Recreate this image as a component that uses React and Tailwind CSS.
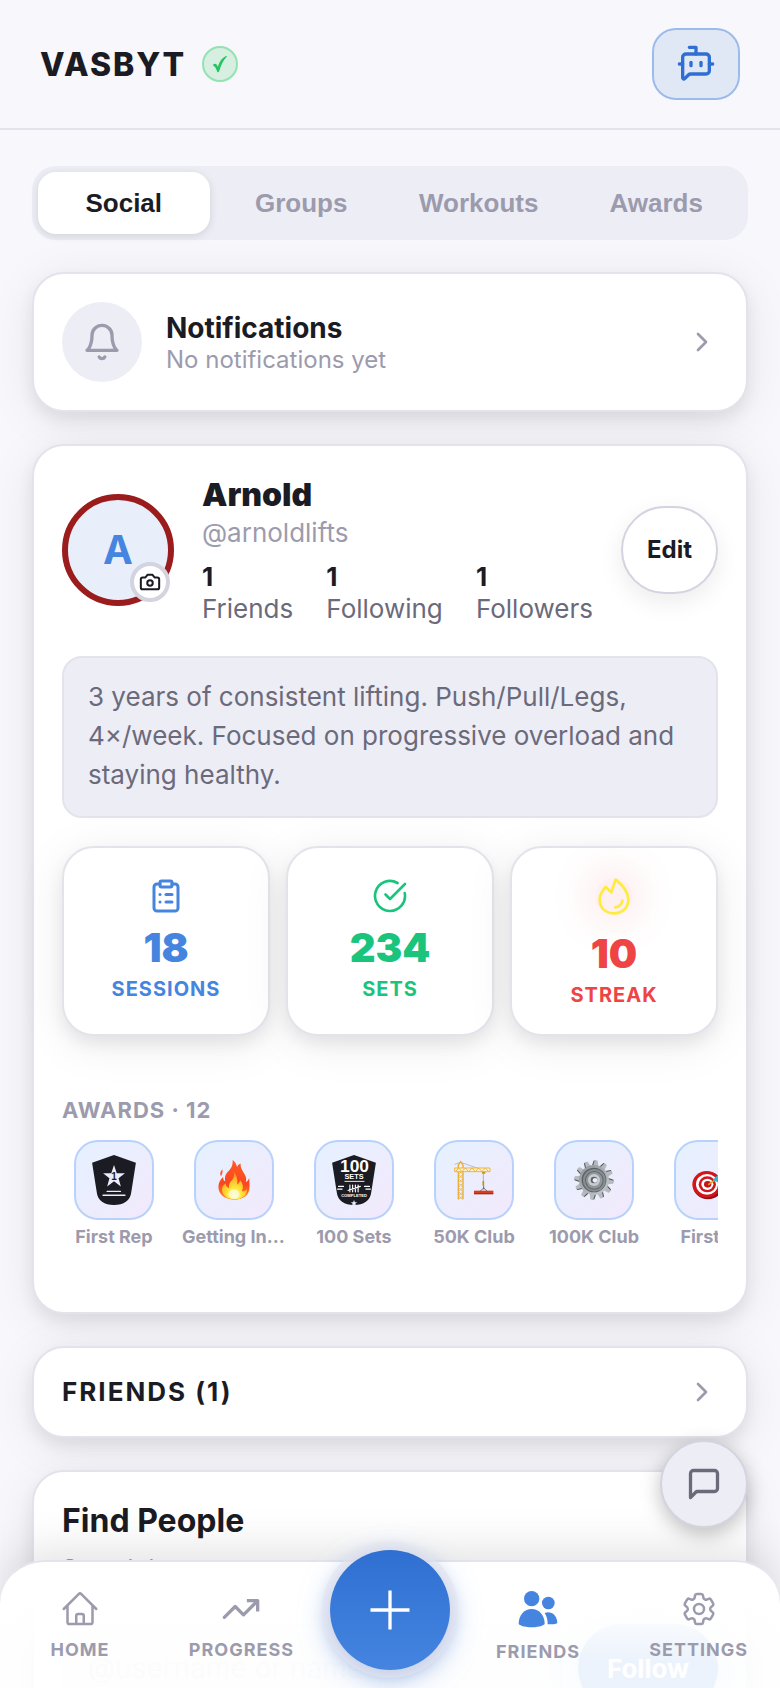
import React from "react";
import { BotMessageSquare, ChevronRight, CircleCheckBig, ClipboardList } from "lucide-react";
import { HiOutlineHome, HiOutlineCog6Tooth } from "react-icons/hi2";

const cardClass =
  "rounded-[32px] border-2 border-[#e4e3ec] bg-white shadow-[0_8px_16px_rgba(0,0,0,0.07),0_8px_48px_rgba(0,0,0,0.08)]";

function VerifiedTick() {
  return (
    <svg viewBox="0 0 36 36" className="size-9 shrink-0" aria-hidden="true">
      <path
        d="M11.200 18.500c1.800-1.400 3.500-.9 4.700 2.400C17.600 15.500 20 11.800 24.300 10.100c.7-.2.800.2.400.7-3.600 3.700-5.700 8.200-7.600 14.800-.8 1-1.500 1-1.900-.2-1.200-3.200-2-4.700-4-6-.3-.2-.3-.6 0-.9Z"
        fill="#22c55e"
      />
    </svg>
  );
}

function BellIcon() {
  return (
    <svg viewBox="0 0 24 24" className="size-10" fill="none" stroke="currentColor" strokeWidth="2" strokeLinecap="round" strokeLinejoin="round" aria-hidden="true">
      <path d="M6 8a6 6 0 0 1 12 0c0 7 3 9 3 9H3s3-2 3-9" />
      <path d="M10.300 21a1.940 1.940 0 0 0 3.400 0" />
    </svg>
  );
}

function CameraIcon() {
  return (
    <svg viewBox="0 0 24 24" className="size-[22px]" fill="none" stroke="currentColor" strokeWidth="2.200" strokeLinecap="round" strokeLinejoin="round" aria-hidden="true">
      <path d="M14.500 4h-5L7 7H4a2 2 0 0 0-2 2v9a2 2 0 0 0 2 2h16a2 2 0 0 0 2-2V9a2 2 0 0 0-2-2h-3l-2.500-3z" />
      <circle cx="12" cy="13" r="3" />
    </svg>
  );
}

function FlameIcon() {
  return (
    <svg viewBox="0 2 108 108" className="size-9 overflow-visible" fill="none" stroke="#ffeb3b" strokeWidth="8" strokeLinecap="round" strokeLinejoin="round" aria-hidden="true">
      <path d="M59 7c18 14 38 36 38 60 0 24-18 41-43 41S11 92 11 67c0-14 8-27 18-38l17 16Z" />
      <path d="M79 70c-2 12-9 18-21 20" />
    </svg>
  );
}

function ChatIcon() {
  return (
    <svg viewBox="0 0 24 24" className="size-9" fill="none" stroke="currentColor" strokeWidth="2.200" strokeLinecap="round" strokeLinejoin="round" aria-hidden="true">
      <path d="M21 15a2 2 0 0 1-2 2H7l-4 4V5a2 2 0 0 1 2-2h14a2 2 0 0 1 2 2z" />
    </svg>
  );
}

function TrendIcon() {
  return (
    <svg viewBox="0 0 24 24" className="size-10" fill="none" stroke="currentColor" strokeWidth="2" strokeLinejoin="round" aria-hidden="true">
      <path d="M21.500 7.500 13.500 15.500l-5-5L2 17" strokeLinecap="round" />
      <path d="M15.500 7H22v6.500" />
    </svg>
  );
}

function PeopleIcon() {
  return (
    <svg viewBox="0 0 120 120" className="size-10" fill="#4585e0" aria-hidden="true">
      <circle cx="41" cy="29" r="23" />
      <circle cx="91" cy="42" r="19" />
      <path d="M2 104C2 78 20 60 41 60s39 18 39 44c0 3-14 10.500-39 10.500S2 107 2 104Z" />
      <path d="M80 72c18-7 37 5 38 29 0 3-10 5-29 5 0-14-3-25-9-34Z" />
    </svg>
  );
}

const shield = "M50 2 98 19 88 83c-2 20-17 29-38 29S14 103 12 83L2 19Z";

function FirstRepBadge() {
  return (
    <svg viewBox="0 0 100 114" className="h-[52px] w-[46px]" aria-hidden="true">
      <path d={shield} fill="#1b1b23" />
      <path d="m50 24 6 18h18L60 53l5 18-15-11-15 11 5-18-14-11h18Z" fill="#ececfb" />
      <text x="50" y="58" textAnchor="middle" fontFamily="Liberation Sans, sans-serif" fontWeight="700" fontSize="22" fill="#1b1b23">1</text>
      <path d="M35 82h29M26 90.500h48" stroke="#ececfb" strokeWidth="3" strokeLinecap="round" />
    </svg>
  );
}

function HundredSetsBadge() {
  return (
    <svg viewBox="0 0 100 114" className="h-[52px] w-[46px]" aria-hidden="true">
      <path d={shield} fill="#1b1b23" />
      <g fill="#fff" textAnchor="middle" fontFamily="Liberation Sans, sans-serif" fontWeight="700">
        <text x="51" y="40" fontSize="38">100</text>
        <text x="50" y="55" fontSize="16">SETS</text>
        <text x="50" y="95" fontSize="9">COMPLETED</text>
      </g>
      <g stroke="#fff" fill="none" strokeWidth="2.500" strokeLinecap="round">
        <path d="M30 60h42" strokeWidth="2" />
        <path d="M41 68v15M47 68v15M53 68v15M59 68v15M37 80l27-9" />
        <path d="M16 71h11M14 77h10M73 71h11M76 77h10" />
      </g>
      <path d="m50 101 2 5h5l-4 3 1 4-4-2-4 2 1-4-4-3h5Z" fill="#ececfb" />
    </svg>
  );
}

function FireArt() {
  return (
    <svg viewBox="0 0 94 118" className="h-10 w-8" aria-hidden="true">
      <defs>
        <linearGradient id="fire-outer" x1="0" y1="0" x2="0" y2="1">
          <stop offset="0" stopColor="#ff5a25" />
          <stop offset="0.600" stopColor="#f9471f" />
          <stop offset="1" stopColor="#ff8a1e" />
        </linearGradient>
        <radialGradient id="fire-inner" cx="0.500" cy="0.850" r="0.750">
          <stop offset="0" stopColor="#fffbd0" />
          <stop offset="0.350" stopColor="#ffe83a" />
          <stop offset="0.800" stopColor="#ffae28" />
          <stop offset="1" stopColor="#ff7c22" />
        </radialGradient>
      </defs>
      <path d="M43 0c1 16-4 25-14 35-8 8-10 17-8 28-5-2-6-7-6-13C7 57 1 66 1 80c0 21 18 37 46 37s46-14 46-39c0-9-1-15-1-25-3 7-6 10-10 12 3-10 0-18-6-27-8-12-11-22-9-28-7 2-10 7-11 11C54 12 50 5 43 0Z" fill="url(#fire-outer)" />
      <path d="M12 28c-6 7-8 14-3 20 2-5 5-8 4-20Z" fill="#fb5a34" />
      <path d="M45 32c5 14 1 23-7 31-5 6-7 13-5 20-7-2-10-7-11-14-8 5-12 13-10 22 3 15 15 25 35 25 24 0 39-12 38-30-5 5-10 7-15 6 7-12 2-24-5-32-2 6-4 10-8 12 1-17-3-30-12-40Z" fill="url(#fire-inner)" />
      <ellipse cx="47" cy="101" rx="17" ry="14" fill="#fffce0" opacity="0.700" />
    </svg>
  );
}

function CraneArt() {
  return (
    <svg viewBox="0 0 120 118" className="size-10" fill="none" aria-hidden="true">
      <path d="M2 12 20 6l72 25" stroke="#8e8b87" strokeWidth="1.500" />
      <path d="M13 117V14l7-10 7 10v103" stroke="#e9ab35" strokeWidth="4" />
      <path d="m13 30 14 12-14 13 14 13-14 13 14 13-14 13 14 10M27 30 13 42l14 13-14 13 14 13-14 13 14 13-14 10" stroke="#f2bd4b" strokeWidth="3" />
      <path d="M2 23h106v11H2Z" fill="#fdf3d5" stroke="#eeb341" strokeWidth="3" />
      <path d="m5 34 9-11 10 11 10-11 10 11 10-11 10 11 10-11 10 11 10-11 10 11" stroke="#efb643" strokeWidth="3" />
      <path d="M88 35v40" stroke="#a58f60" strokeWidth="2" />
      <path d="M84 35h10v5H84Z" fill="#c78f1c" />
      <path d="M88 62v14" stroke="#b79420" strokeWidth="5" />
      <path d="m70 100 19-17 19 17M89 76v11" stroke="#35353a" strokeWidth="2" />
      <path d="M60 91h58v10H60Z" fill="#d63c1f" />
      <path d="M60 99h58v3H60Z" fill="#8f2918" />
    </svg>
  );
}

const teeth = [0, 30, 60, 90, 120, 150, 180, 210, 240, 270, 300, 330];

function GearArt() {
  return (
    <svg viewBox="0 0 120 120" className="size-10" aria-hidden="true">
      <defs>
        <linearGradient id="gear-metal" x1="0" y1="0" x2="1" y2="1">
          <stop offset="0" stopColor="#8c9296" />
          <stop offset="0.500" stopColor="#a9afb2" />
          <stop offset="1" stopColor="#c4cacd" />
        </linearGradient>
      </defs>
      {teeth.map((a) => (
        <g key={a} transform={"rotate(" + (a + 8) + " 60 60)"}>
          <path d="M51 2h8l4 16H48Z" fill="#4b5054" />
          <path d="M54 1h9l4 18H51Z" fill="#b4babd" />
        </g>
      ))}
      <circle cx="60" cy="60" r="45" fill="url(#gear-metal)" />
      <circle cx="60" cy="60" r="37" fill="#596066" />
      <circle cx="61" cy="61" r="34" fill="#878e92" />
      <circle cx="61" cy="61" r="28" fill="#62696e" />
      <circle cx="61" cy="61" r="25" fill="#90979b" />
      <circle cx="60" cy="60" r="18" fill="#c9cdd0" />
      <circle cx="60" cy="60" r="10" fill="#5d6367" />
      <circle cx="63" cy="61" r="7" fill="#ececfa" />
    </svg>
  );
}

function TargetArt() {
  return (
    <svg viewBox="0 0 120 120" className="size-10 overflow-visible" aria-hidden="true">
      <ellipse cx="42" cy="77" rx="45" ry="41" fill="#8e1014" />
      <ellipse cx="38" cy="73" rx="43" ry="40" fill="#d1151b" />
      <ellipse cx="39" cy="73" rx="33" ry="31" fill="#fff" />
      <ellipse cx="40" cy="73" rx="26" ry="24" fill="#cf181d" />
      <ellipse cx="40" cy="73" rx="18" ry="17" fill="#fff" />
      <ellipse cx="41" cy="73" rx="11" ry="10" fill="#c2141a" />
      <path d="m44 73 24-16" stroke="#d7a428" strokeWidth="5" strokeLinecap="round" />
      <path d="m56 60 16-16 26-14-4 22-24 14Z" fill="#35b8cc" />
    </svg>
  );
}

const tabs = ["Social", "Groups", "Workouts", "Awards"];

const counts = [
  { label: "Friends", value: 1 },
  { label: "Following", value: 1 },
  { label: "Followers", value: 1 },
];

const stats = [
  { label: "SESSIONS", value: 18, color: "text-[#4585e0]", icon: <ClipboardList size={36} />, box: "h-9" },
  { label: "SETS", value: 234, color: "text-[#1bc47d]", icon: <CircleCheckBig size={36} strokeWidth={1.75} />, box: "h-9" },
  { label: "STREAK", value: 10, color: "text-[#ef4444]", icon: <FlameIcon />, box: "h-[42px]", glow: true },
];

const awards = [
  { name: "First Rep", art: <FirstRepBadge /> },
  { name: "Getting Into It", art: <FireArt /> },
  { name: "100 Sets", art: <HundredSetsBadge /> },
  { name: "50K Club", art: <CraneArt /> },
  { name: "100K Club", art: <GearArt /> },
  { name: "First PR", art: <TargetArt /> },
];

function Header() {
  return (
    <header className="flex shrink-0 items-center justify-between border-b-2 border-[#e4e3ec] px-10 py-7">
      <div className="flex items-center gap-4">
        <h1 className="pt-0.5 text-[32px] leading-10 font-extrabold tracking-[2px]">VASBYT</h1>
        <span className="flex size-9 items-center justify-center rounded-full border-2 border-[#93e3b2] bg-[#d7efe1]" title="Verified">
          <VerifiedTick />
        </span>
      </div>
      <button aria-label="Open coach" className="flex h-[72px] w-[88px] items-center justify-center rounded-3xl border-2 border-[#9dbbea] bg-[#e1e8f5] text-[#2f6fd3]">
        <BotMessageSquare size={40} />
      </button>
    </header>
  );
}

function Tabs() {
  return (
    <div role="tablist" className="grid grid-cols-4 gap-1.5 rounded-3xl bg-[#ededf5] p-1.5 font-['Liberation_Sans',sans-serif]">
      {tabs.map((t, i) => (
        <button
          key={t}
          role="tab"
          aria-selected={i === 0}
          className={
            i === 0
              ? "h-[62px] rounded-[18px] bg-white text-[26px] font-bold text-[#1b1b23] shadow-[0_2px_8px_rgba(0,0,0,0.12)]"
              : "h-[62px] rounded-[18px] text-[26px] font-bold text-[#9c9bad]"
          }
        >
          {t}
        </button>
      ))}
    </div>
  );
}

function Profile() {
  return (
    <section className={cardClass + " px-7 pt-7 pb-16"}>
      <div className="flex items-center gap-7">
        <div className="relative flex size-28 shrink-0 items-center justify-center rounded-full border-[6px] border-[#9b1c1c] bg-[#e8effa] text-[40px] font-bold text-[#4585e0]">
          A
          <button aria-label="Change photo" className="absolute -right-0.5 -bottom-0.5 flex size-10 items-center justify-center rounded-full border-4 border-[#d4d4e0] bg-white text-[#1b1b23]">
            <CameraIcon />
          </button>
        </div>
        <div className="min-w-0 flex-1">
          <h2 className="text-[32px] leading-[42px] font-black">Arnold</h2>
          <p className="mt-px text-[26px] leading-8 text-[#9c9bad]">@arnoldlifts</p>
          <dl className="mt-3 mb-px flex justify-between text-[26px] leading-8">
            {counts.map((c) => (
              <div key={c.label} className="flex flex-col-reverse">
                <dt className="text-[#6b6a7b]">{c.label}</dt>
                <dd className="font-bold">{c.value}</dd>
              </div>
            ))}
          </dl>
        </div>
        <button className="h-[88px] shrink-0 rounded-full border-2 border-[#d4d3e0] bg-white px-6 text-2xl font-bold shadow-[0_8px_24px_rgba(0,0,0,0.08)]">
          Edit
        </button>
      </div>

      <p className="mt-[30px] rounded-[20px] border-2 border-[#e4e3ec] bg-[#ededf6] px-6 pt-[19px] pb-[22px] text-[26px] leading-[39px] text-[#6b6a7b]">
        3 years of consistent lifting. Push/Pull/Legs, 4×/week. Focused on progressive overload and staying healthy.
      </p>

      <div className="mt-7 grid grid-cols-3 gap-4">
        {stats.map((s) => (
          <div key={s.label} className={cardClass + " flex flex-col items-center pt-[30px] pb-[27px] " + s.color}>
            <span className={"flex items-start " + s.box}>
              <span className={s.glow ? "rounded-full bg-[#ef4444]/8 shadow-[0_0_40px_8px_rgba(239,68,68,0.13)]" : ""}>{s.icon}</span>
            </span>
            <span className="mt-3.5 text-[40px] leading-10 font-black">{s.value}</span>
            <span className="mt-[9px] text-xl leading-6 font-bold tracking-[1px]">{s.label}</span>
          </div>
        ))}
      </div>

      <h3 className="mt-[60px] text-[22px] leading-7 font-bold tracking-[1px] text-[#9c9bad]">AWARDS · 12</h3>
      <ul className="mt-4 flex gap-4 overflow-x-auto [scrollbar-width:none]">
        {awards.map((a) => (
          <li key={a.name} className="flex w-[104px] shrink-0 flex-col items-center">
            <span className="flex size-20 items-center justify-center rounded-3xl border-2 border-[#b9d2fb] bg-linear-135 from-[#e5f1ff] to-[#f2e9fc]">
              {a.art}
            </span>
            <span className="mt-1.5 w-full truncate text-center text-lg leading-[22px] font-bold text-[#9c9bad]">{a.name}</span>
          </li>
        ))}
      </ul>
    </section>
  );
}

function NavItem({ icon, label, lower }) {
  return (
    <a href="#" className="flex min-w-24 flex-col items-center text-[#9c9bad]">
      {icon}
      <span className={(lower ? "mt-3" : "mt-2.5") + " text-lg leading-[22px] font-bold tracking-[1px]"}>{label}</span>
    </a>
  );
}

function BottomNav() {
  return (
    <nav className="absolute inset-x-0 bottom-0 grid h-32 grid-cols-[1fr_120px_1fr] rounded-t-[44px] border-t-2 border-[#e4e3ec] bg-linear-to-b from-white from-30% to-white/90 to-80% px-8 shadow-[0_-8px_48px_rgba(0,0,0,0.12)]">
      <div className="flex justify-between pt-[27px] pr-9">
        <NavItem icon={<HiOutlineHome size={40} />} label="HOME" />
        <NavItem icon={<TrendIcon />} label="PROGRESS" />
      </div>
      <button
        aria-label="Start workout"
        className="-mt-3 flex size-[120px] items-center justify-center rounded-full bg-linear-to-b from-[#2f6fd1] to-[#4585e0] text-white shadow-[0_0_0_8px_rgba(228,228,240,0.6),0_8px_32px_rgba(69,133,224,0.4),0_4px_16px_rgba(47,80,150,0.35)]"
      >
        <svg viewBox="0 0 40 40" className="size-10" stroke="currentColor" strokeWidth="3.300" aria-hidden="true">
          <path d="M20 0.500v39M0.500 20h39" />
        </svg>
      </button>
      <div className="flex justify-between pt-[27px] pl-10">
        <NavItem icon={<PeopleIcon />} label="FRIENDS" lower />
        <NavItem icon={<HiOutlineCog6Tooth size={40} />} label="SETTINGS" />
      </div>
    </nav>
  );
}

export default function App() {
  return (
    <div className="relative flex h-screen flex-col overflow-hidden bg-[#f7f7fc] font-[Inter,sans-serif] text-[#1b1b23]">
      <Header />
      <main className="flex min-h-0 flex-1 flex-col gap-8 overflow-y-auto px-8 pt-9 [scrollbar-width:none] *:shrink-0">
        <Tabs />
        <button className={cardClass + " flex items-center gap-6 p-7 text-left"}>
          <span className="flex size-20 items-center justify-center rounded-full bg-[#ededf6] text-[#9c9bad]">
            <BellIcon />
          </span>
          <span className="flex flex-1 flex-col pt-0.5">
            <span className="text-[28px] leading-[34px] font-bold">Notifications</span>
            <span className="text-2xl leading-[30px] text-[#9c9bad]">No notifications yet</span>
          </span>
          <ChevronRight size={32} className="text-[#9c9bad]" />
        </button>
        <Profile />
        <button className={cardClass + " flex items-center justify-between px-7 py-6 text-left"}>
          <span className="text-[26px] leading-10 font-bold tracking-[2px]">FRIENDS (1)</span>
          <ChevronRight size={32} className="text-[#9c9bad]" />
        </button>
        <section className={cardClass + " mb-40 p-7"}>
          <h2 className="text-[32px] leading-[42px] font-bold">Find People</h2>
          <label htmlFor="people-search" className="mt-3 block text-2xl leading-[30px] text-[#9c9bad]">
            Search by @username
          </label>
          <div className="mt-10 flex gap-4">
            <input
              id="people-search"
              placeholder="@username or name"
              className="h-[88px] min-w-0 flex-1 rounded-[28px] border-2 border-[#f0f0f6] bg-[#f7f7fc] px-6 text-[28px] placeholder:text-[#dddce8]"
            />
            <button className="h-[88px] w-[140px] rounded-[44px] bg-[#4585e0] text-[26px] font-bold text-white shadow-[0_4px_56px_rgba(69,133,224,0.6)]">
              Follow
            </button>
          </div>
        </section>
      </main>
      <BottomNav />
      <button
        aria-label="Messages"
        className="absolute right-8 bottom-40 flex size-[88px] items-center justify-center rounded-full border-2 border-[#d4d3e0] bg-[#ededf6] text-[#6b6a7b] shadow-[0_6px_20px_rgba(0,0,0,0.25)]"
      >
        <ChatIcon />
      </button>
    </div>
  );
}
